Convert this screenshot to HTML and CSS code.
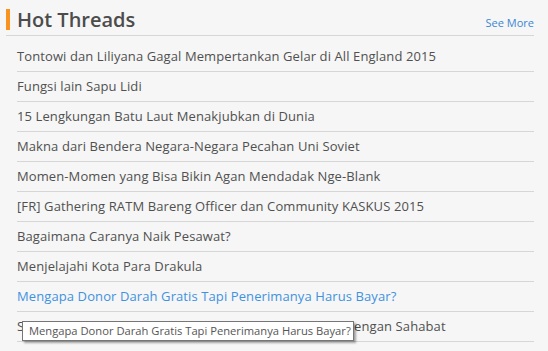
FILE: index.html
```html
<!DOCTYPE html>
<html lang="id">
<head>
    <meta charset="UTF-8">
    <title>Hot Threads</title>
    <link rel="stylesheet" href="styles.css">
</head>
<body>
    <div class="hot-threads">
        <div class="header">
            <h2 class="title">Hot Threads</h2>
            <a class="see-more" href="#">See More</a>
        </div>
        <ul class="thread-list">
            <li><a href="#">Tontowi dan Liliyana Gagal Mempertankan Gelar di All England 2015</a></li>
            <li><a href="#">Fungsi lain Sapu Lidi</a></li>
            <li><a href="#">15 Lengkungan Batu Laut Menakjubkan di Dunia</a></li>
            <li><a href="#">Makna dari Bendera Negara-Negara Pecahan Uni Soviet</a></li>
            <li><a href="#">Momen-Momen yang Bisa Bikin Agan Mendadak Nge-Blank</a></li>
            <li><a href="#">[FR] Gathering RATM Bareng Officer dan Community KASKUS 2015</a></li>
            <li><a href="#">Bagaimana Caranya Naik Pesawat?</a></li>
            <li><a href="#">Menjelajahi Kota Para Drakula</a></li>
            <li><a class="hover" href="#">Mengapa Donor Darah Gratis Tapi Penerimanya Harus Bayar?</a></li>
            <li><a href="#">Serunya Menghabiskan Masa Libur Panjang Bersama dengan Sahabat</a></li>
        </ul>
    </div>
    <div class="tooltip">Mengapa Donor Darah Gratis Tapi Penerimanya Harus Bayar?</div>
</body>
</html>
```

FILE: styles.css
```css
body { margin: 0; background: #f6f6f6; font-family: "Open Sans", sans-serif; }
.hot-threads { width: 528px; margin-left: 6px; }
.header { display: flex; align-items: flex-end; justify-content: space-between; height: 35px; border-bottom: 1px solid #d6d6d6; }
.title { margin: 0 0 5px 0; border-left: 4px solid #f7931e; padding-left: 7px; height: 21px; line-height: 21px; font-size: 20px; font-weight: 600; color: #4c4c4c; }
.see-more { margin-bottom: 5px; font-size: 11px; line-height: 15px; color: #3b87d4; text-decoration: none; }
.thread-list { list-style: none; margin: 0 0 0 11px; padding: 6px 0 0 0; }
.thread-list li { height: 29px; line-height: 29px; border-bottom: 1px solid #d6d6d6; font-size: 13px; letter-spacing: 0.1px; white-space: nowrap; }
.thread-list a { color: #505050; text-decoration: none; }
.thread-list a.hover { color: #3f92e0; }
.tooltip { position: absolute; left: 22px; top: 321px; width: 324px; height: 18px; line-height: 18px; padding: 0 0 0 6px; background: #fff; border: 1px solid #767676; box-shadow: 2px 2px 2px rgba(0,0,0,0.35); font-size: 11.2px; color: #555; white-space: nowrap; overflow: hidden; }
```
